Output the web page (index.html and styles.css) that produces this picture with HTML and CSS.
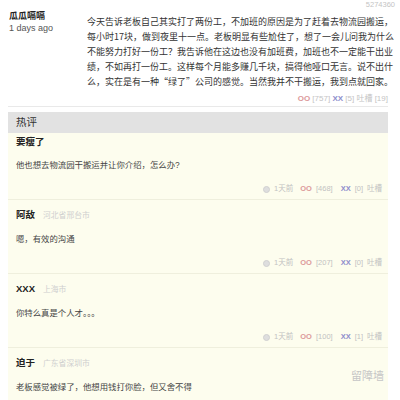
FILE: index.html
```html
<html>

<head>
	<meta charset="UTF-8">
	<title>瓜瓜嗝嗝</title>
	<link rel="stylesheet" href="styles.css">
</head>

<body>
	<div class="page">
		<div class="post">
			<div class="author">
				<div class="author-name">瓜瓜嗝嗝</div>
				<div class="author-time">1 days ago</div>
			</div>
			<div class="post-main">
				<div class="post-id">5274360</div>
				<div class="post-text">
					今天告诉老板自己其实打了两份工，不加班的原因是为了赶着去物流园搬运，<br>
					每小时17块，做到夜里十一点。老板明显有些尬住了，想了一会儿问我为什么<br>
					不能努力打好一份工？我告诉他在这边也没有加班费，加班也不一定能干出业<br>
					绩，不如再打一份工。这样每个月能多赚几千块，搞得他哑口无言。说不出什<br>
					么，实在是有一种“绿了”公司的感觉。当然我并不干搬运，我到点就回家。
				</div>
			</div>
		</div>
		<div class="post-foot">
			<span class="oo">OO</span> <span class="num">[757]</span>
			<span class="xx">XX</span> <span class="num">[5]</span>
			<span class="num">吐槽 [19]</span>
		</div>

		<div class="hot">
			<div class="hot-title">热评</div>

			<div class="comment first">
				<div class="comment-head"><span class="comment-name">要瘦了</span></div>
				<div class="comment-text">他也想去物流园干搬运并让你介绍，怎么办?</div>
				<div class="comment-meta">
					<span class="clock"></span><span>1天前</span>
					<span class="oo">OO</span><span>[468]</span>
					<span class="xx">XX</span><span>[0]</span>
					<span>吐槽</span>
				</div>
			</div>

			<div class="comment">
				<div class="comment-head"><span class="comment-name">阿敌</span><span class="comment-loc">河北省邢台市</span></div>
				<div class="comment-text">嗯，有效的沟通</div>
				<div class="comment-meta">
					<span class="clock"></span><span>1天前</span>
					<span class="oo">OO</span><span>[207]</span>
					<span class="xx">XX</span><span>[0]</span>
					<span>吐槽</span>
				</div>
			</div>

			<div class="comment">
				<div class="comment-head"><span class="comment-name">XXX</span><span class="comment-loc">上海市</span></div>
				<div class="comment-text">你特么真是个人才。。。</div>
				<div class="comment-meta">
					<span class="clock"></span><span>1天前</span>
					<span class="oo">OO</span><span>[100]</span>
					<span class="xx">XX</span><span>[1]</span>
					<span>吐槽</span>
				</div>
			</div>

			<div class="comment last">
				<div class="comment-head"><span class="comment-name">迫于</span><span class="comment-loc">广东省深圳市</span></div>
				<div class="comment-text">老板感觉被绿了，他想用钱打你脸，但又舍不得</div>
			</div>

			<!-- watermark over the last comment -->
			<div class="mark">留障墙</div>
		</div>
	</div>
</body>

</html>
```

FILE: styles.css
```css
body {
	margin: 0;
	background: #fff;
	color: #333;
	font-family: "Liberation Sans", "Noto Sans CJK SC", sans-serif;
}

.page {
	width: 400px;
	height: 400px;
	overflow: hidden;
}

.post {
	display: flex;
	flex-direction: row;
	padding-left: 9px;
}

.author {
	width: 78px;
	flex-shrink: 0;
	padding-top: 10px;
}

.author-name {
	font-size: 9px;
	line-height: 12px;
	font-weight: bold;
	color: #222;
}

.author-time {
	font-size: 9px;
	line-height: 12px;
	color: #555;
}

.post-main {
	flex: 1;
	display: flex;
	flex-direction: column;
}

.post-id {
	height: 10px;
	padding-right: 5px;
	text-align: right;
	font-size: 7.5px;
	line-height: 10px;
	color: #c4c4c4;
}

.post-text {
	padding-top: 4px;
	font-family: "Noto Sans CJK SC", "Liberation Sans", sans-serif;
	font-size: 9px;
	line-height: 15px;
	color: #333;
	white-space: nowrap;
}

.post-foot {
	margin: 4px 12px 0 8px;
	padding-bottom: 1px;
	border-bottom: 1px solid #e9e9e9;
	text-align: right;
	font-size: 8px;
	line-height: 12px;
	color: #c4c4c4;
}

.oo {
	color: #dc9a9a;
	font-weight: bold;
}

.xx {
	color: #8e8ecc;
	font-weight: bold;
}

.hot {
	position: relative;
	margin: 5px 12px 0 8px;
	background: #fdfdee;
	height: 288px;
}

.hot-title {
	background: #e2e2e2;
	height: 21px;
	line-height: 21px;
	padding-left: 8px;
	font-size: 10.5px;
	color: #333;
}

.comment {
	padding: 9px 6px 4px 8px;
	border-bottom: 1px solid #efefdd;
}

.comment.first {
	padding-top: 3px;
}

.comment.last {
	border-bottom: none;
}

.comment-head {
	line-height: 12px;
}

.comment-name {
	font-size: 9.5px;
	font-weight: bold;
	color: #222;
}

.comment-loc {
	margin-left: 8px;
	font-size: 7.8px;
	color: #cfcfcf;
}

.comment-text {
	margin-top: 11px;
	font-size: 8.4px;
	line-height: 12px;
	color: #444;
}

.comment-meta {
	margin-top: 12px;
	display: flex;
	flex-direction: row;
	justify-content: flex-end;
	align-items: center;
	gap: 4px;
	font-size: 7.5px;
	line-height: 12px;
	color: #c2c2c2;
}

.comment-meta .oo {
	margin-left: 3px;
}

.comment-meta .xx {
	margin-left: 4px;
}

.clock {
	width: 5px;
	height: 5px;
	border: 1px solid #d0d0d0;
	border-radius: 50%;
	background: #dedede;
}

.mark {
	position: absolute;
	right: 4px;
	top: 257px;
	font-size: 11px;
	line-height: 14px;
	color: #c6c6c6;
}
```
